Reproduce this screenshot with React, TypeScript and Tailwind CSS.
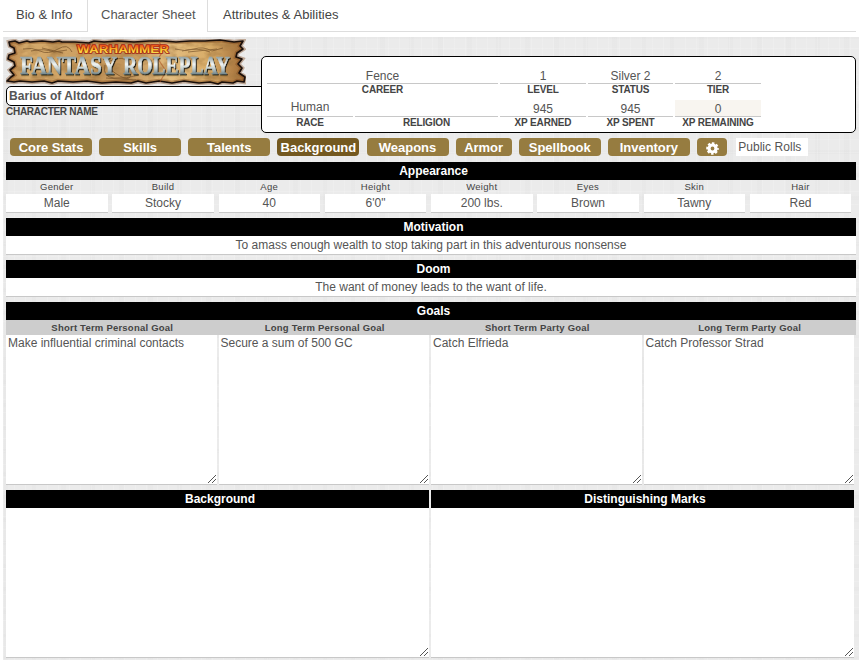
import React from "react";

const TEXTURE =
  "bg-[#ebebeb] bg-[repeating-linear-gradient(90deg,rgba(255,255,255,0.14)_0px,rgba(255,255,255,0.14)_1px,transparent_1px,transparent_11px),repeating-linear-gradient(0deg,rgba(255,255,255,0.14)_0px,rgba(255,255,255,0.14)_1px,transparent_1px,transparent_13px),repeating-linear-gradient(90deg,rgba(0,0,0,0.01)_0px,rgba(0,0,0,0.01)_5px,transparent_5px,transparent_29px),repeating-linear-gradient(0deg,rgba(0,0,0,0.01)_0px,rgba(0,0,0,0.01)_4px,transparent_4px,transparent_23px)]";

function Logo() {
  return (
    <svg width="240" height="46" viewBox="0 0 240 46" className="block" role="img" aria-label="Warhammer Fantasy Roleplay">
      <defs>
        <linearGradient id="parchment" x1="0" y1="0" x2="1" y2="0">
          <stop offset="0" stopColor="#b9834a" />
          <stop offset="0.08" stopColor="#d6ab6c" />
          <stop offset="0.3" stopColor="#cda062" />
          <stop offset="0.5" stopColor="#c1945a" />
          <stop offset="0.68" stopColor="#e3bd80" />
          <stop offset="0.85" stopColor="#d8ac68" />
          <stop offset="1" stopColor="#a06a35" />
        </linearGradient>
        <linearGradient id="steel" x1="0" y1="0" x2="0" y2="1">
          <stop offset="0.15" stopColor="#87999c" />
          <stop offset="0.45" stopColor="#f2f5f3" />
          <stop offset="0.62" stopColor="#c0cccc" />
          <stop offset="0.85" stopColor="#667a7e" />
        </linearGradient>
        <linearGradient id="flame" x1="0" y1="0" x2="0" y2="1">
          <stop offset="0.2" stopColor="#ee5a1a" />
          <stop offset="0.55" stopColor="#f7c62c" />
          <stop offset="1" stopColor="#fbe45c" />
        </linearGradient>
        <filter id="grain" x="0" y="0" width="1" height="1">
          <feTurbulence type="fractalNoise" baseFrequency="0.07 0.12" numOctaves="3" seed="4" />
          <feColorMatrix values="0 0 0 0 0.35  0 0 0 0 0.18  0 0 0 0 0.05  1.6 0 0 0 -0.68" />
          <feComposite in2="SourceGraphic" operator="in" />
        </filter>
        <filter id="letterShadow" x="-0.1" y="-0.2" width="1.2" height="1.5">
          <feDropShadow dx="1" dy="1.2" stdDeviation="0.5" floodColor="#14140f" floodOpacity="1" />
        </filter>
        <path
          id="sheet"
          d="M3 3 L9 2 L13 4 L21 2 L24 3 L36 2 L47 3 L53 2 L56 3 L69 3 L83 4 L88 2 L98 3 L112 2 L128 3 L143 2 L157 2 L170 3 L184 2 L199 2 L214 1 L228 3 L237 2 L234 7 L237 10 L231 14 L230 18 L236 20 L232 25 L236 29 L233 34 L239 38 L238 43 L231 42 L227 44 L216 43 L212 45 L204 43 L193 44 L178 42 L166 44 L153 42 L140 44 L132 42 L125 44 L110 43 L96 44 L81 42 L67 43 L52 42 L46 44 L38 42 L26 43 L14 42 L8 43 L1 42 L5 38 L8 36 L4 31 L9 27 L8 23 L2 20 L3 16 L9 14 L8 9 L4 7 Z"
        />
      </defs>
      <use href="#sheet" fill="url(#parchment)" />
      <use href="#sheet" fill="#000" filter="url(#grain)" />
      <use href="#sheet" fill="none" stroke="#7a431a" strokeWidth="4.5" opacity="0.4" />
      <use href="#sheet" fill="none" stroke="#1a0f0a" strokeWidth="1.7" strokeLinejoin="round" />
      <path d="M153 2 L157 12 L152 20 L160 32 L154 43" fill="none" stroke="#a84a19" strokeWidth="1.2" opacity="0.55" />
      <g fill="none" stroke="#5b3a18" strokeWidth="0.9" opacity="0.6">
        <path d="M17 10 Q26 8 34 12 T52 10 T66 13 M25 12 Q38 9 48 13 L61 11 M36 9 L57 14" />
        <path d="M169 10 Q179 13 188 10 T206 12 L217 9 M176 12 Q192 8 204 13 M182 13 L211 10" />
        <path d="M99 26 Q96 38 108 39 T133 36 M104 22 Q123 14 125 31 T105 31 M100 39 L130 41" />
      </g>
      <text
        x="71"
        y="13.6"
        fontFamily="Liberation Sans"
        fontWeight="bold"
        fontSize="10"
        textLength="92"
        lengthAdjust="spacingAndGlyphs"
        fill="url(#flame)"
        stroke="#a32412"
        strokeWidth="1.3"
        paintOrder="stroke"
      >
        WARHAMMER
      </text>
      <g fontFamily="Liberation Serif" fontWeight="bold" fill="url(#steel)" stroke="url(#steel)" strokeWidth="0.4" filter="url(#letterShadow)">
        <text x="14" y="35" fontSize="25" textLength="97" lengthAdjust="spacingAndGlyphs">FANTASY</text>
        <text x="117" y="35" fontSize="25" textLength="107" lengthAdjust="spacingAndGlyphs">ROLEPLAY</text>
      </g>
    </svg>
  );
}

function Field({ label, value, width, className = "leading-[17px]" }: { label: string; value: string; width: string; className?: string }) {
  return (
    <div className={`${width} text-center`}>
      <div className={`h-[17px] border-b border-[#c8c8c8] text-[12px] text-[#555] ${className}`}>{value}</div>
      <div className="h-[16px] whitespace-nowrap text-[10px] font-bold leading-[12px] tracking-[-0.15px] text-[#444]">{label}</div>
    </div>
  );
}

function Bar({ children, className = "pl-[5px]" }: { children: React.ReactNode; className?: string }) {
  return <h2 className={`h-[18px] bg-black text-center text-[12px] font-bold leading-[18px] text-white ${className}`}>{children}</h2>;
}

function Grip() {
  return (
    <svg width="9" height="9" viewBox="0 0 9 9" className="absolute bottom-0 right-px" shapeRendering="crispEdges">
      <path d="M0.5 8.5 L8.5 0.5 M4.5 8.5 L8.5 4.5" stroke="#555" strokeWidth="1" />
    </svg>
  );
}

function Area({ text = "", width }: { text?: string; width: string }) {
  return (
    <div className={`relative h-[150px] border-b border-[#c8c8c8] bg-white pl-[2px] text-[12px] leading-[17px] text-[#555] ${width}`}>
      {text}
      <Grip />
    </div>
  );
}

const tabs = [
  { name: "Core Stats", width: "w-[82px]" },
  { name: "Skills", width: "w-[82px]" },
  { name: "Talents", width: "w-[82px]" },
  { name: "Background", width: "w-[82px]", active: true },
  { name: "Weapons", width: "w-[82px]" },
  { name: "Armor", width: "w-[56px]" },
  { name: "Spellbook", width: "w-[82px]" },
  { name: "Inventory", width: "w-[82px]" },
];

const looks = [
  ["Gender", "Male"],
  ["Build", "Stocky"],
  ["Age", "40"],
  ["Height", "6'0\""],
  ["Weight", "200 lbs."],
  ["Eyes", "Brown"],
  ["Skin", "Tawny"],
  ["Hair", "Red"],
];

const goals = [
  ["Short Term Personal Goal", "Make influential criminal contacts"],
  ["Long Term Personal Goal", "Secure a sum of 500 GC"],
  ["Short Term Party Goal", "Catch Elfrieda"],
  ["Long Term Party Goal", "Catch Professor Strad"],
];

export default function App() {
  return (
    <div className="h-[660px] w-[863px] overflow-hidden bg-white pl-[3px] font-['Liberation_Sans',Arial,sans-serif]">
      <nav className="flex h-[32px] w-[853px] text-[13px] leading-[29px] text-[#444]">
        <div className="w-[84px] whitespace-nowrap border-b border-[#ddd] pl-[13px]">Bio &amp; Info</div>
        <div className="w-[121px] whitespace-nowrap border-x border-[#ddd] pl-[13px] text-[#555]">Character Sheet</div>
        <div className="flex-1 border-b border-[#ddd] pl-[15px] tracking-[0.03px]">Attributes &amp; Abilities</div>
      </nav>

      <main className={`mt-[5px] h-[623px] w-[856px] pl-[3px] pt-[2px] ${TEXTURE}`}>
        <header className="flex h-[99px]">
          <div className="w-[255px]">
            <Logo />
            <div className="mt-px h-[20px] w-[263px] rounded-l-[5px] border border-black bg-white pl-[2px] text-[12px] font-bold leading-[18px] tracking-[0.04px] text-[#555]">
              Barius of Altdorf
            </div>
            <div className="text-[10px] font-bold leading-[12px] tracking-[-0.28px] text-[#444]">CHARACTER NAME</div>
          </div>
          <section className="relative mt-[17px] h-[77px] w-[595px] rounded-[5px] border border-black bg-white pl-[5px] pt-[10px]">
            <div className="flex gap-[2px]">
              <Field label="CAREER" value="Fence" width="w-[231px]" className="leading-[19px]" />
              <Field label="LEVEL" value="1" width="w-[86px]" className="leading-[19px]" />
              <Field label="STATUS" value="Silver 2" width="w-[85px]" className="leading-[19px]" />
              <Field label="TIER" value="2" width="w-[86px]" className="leading-[19px]" />
            </div>
            <div className="flex gap-[2px]">
              <Field label="RACE" value="Human" width="w-[86px]" className="leading-[15px]" />
              <Field label="RELIGION" value="" width="w-[143px]" />
              <Field label="XP EARNED" value="945" width="w-[86px]" className="leading-[19px]" />
              <Field label="XP SPENT" value="945" width="w-[85px]" className="leading-[19px]" />
              <Field label="XP REMAINING" value="0" width="w-[86px]" className="bg-[#f8f5f0] leading-[19px]" />
            </div>
          </section>
        </header>

        <div className="flex h-[24px] gap-[7.14px] pl-[4px]">
          {tabs.map((t) => (
            <button
              key={t.name}
              className={`h-[18px] shrink-0 rounded-[4px] text-center text-[13px] font-bold leading-[17px] tracking-[-0.03px] text-white ${t.width} ${t.active ? "bg-[#745920]" : "bg-[#967c40]"}`}
            >
              {t.name}
            </button>
          ))}
          <button aria-label="Settings" className="flex h-[18px] w-[30px] items-center justify-center rounded-[4px] bg-[#967c40] pt-[2px]">
            <svg width="13" height="13" viewBox="0 0 13 13">
              <circle cx="6.5" cy="6.5" r="3.5" fill="none" stroke="#fff" strokeWidth="3.2" />
              <circle cx="6.5" cy="6.5" r="5.2" fill="none" stroke="#fff" strokeWidth="2.2" strokeDasharray="2.4 1.684" strokeDashoffset="1.2" />
            </svg>
          </button>
          <div className="ml-[2px] h-[18px] w-[72px] bg-white pl-[2px] text-[12px] leading-[18px] tracking-[0.05px] text-[#555]">Public Rolls</div>
        </div>

        <section className="h-[56px] w-[850px]">
          <Bar>Appearance</Bar>
          <div className="grid grid-cols-8 text-center">
            {looks.map(([label, value]) => (
              <div key={label} className="pr-[4.75px]">
                <div className="h-[14px] text-[9.5px] leading-[13px] tracking-[0.3px] text-[#444]">{label}</div>
                <div className="h-[19px] border-b border-[#c8c8c8] bg-white text-[12px] leading-[18px] text-[#555]">{value}</div>
              </div>
            ))}
          </div>
        </section>

        <section className="h-[42px] w-[850px]">
          <Bar>Motivation</Bar>
          <div className="h-[19px] border-b border-[#c8c8c8] bg-white text-center text-[12px] leading-[18px] text-[#555]">
            To amass enough wealth to stop taking part in this adventurous nonsense
          </div>
        </section>

        <section className="h-[42px] w-[850px]">
          <Bar>Doom</Bar>
          <div className="h-[19px] border-b border-[#c8c8c8] bg-white text-center text-[12px] leading-[18px] text-[#555]">
            The want of money leads to the want of life.
          </div>
        </section>

        <section className="h-[188px] w-[850px]">
          <Bar>Goals</Bar>
          <div className="grid grid-cols-4">
            {goals.map(([label, text]) => (
              <div key={label}>
                <div className="h-[15px] bg-[#cdcdcd] text-center text-[9.5px] font-bold leading-[16px] tracking-[0.22px] text-[#444]">{label}</div>
                <Area text={text} width="w-[210.6px]" />
              </div>
            ))}
          </div>
        </section>

        <div className="grid w-[850px] grid-cols-2">
          {["Background", "Distinguishing Marks"].map((title) => (
            <section key={title}>
              <Bar className="w-[423px] pl-[5px]">{title}</Bar>
              <Area width="w-[423px]" />
            </section>
          ))}
        </div>
      </main>
    </div>
  );
}
